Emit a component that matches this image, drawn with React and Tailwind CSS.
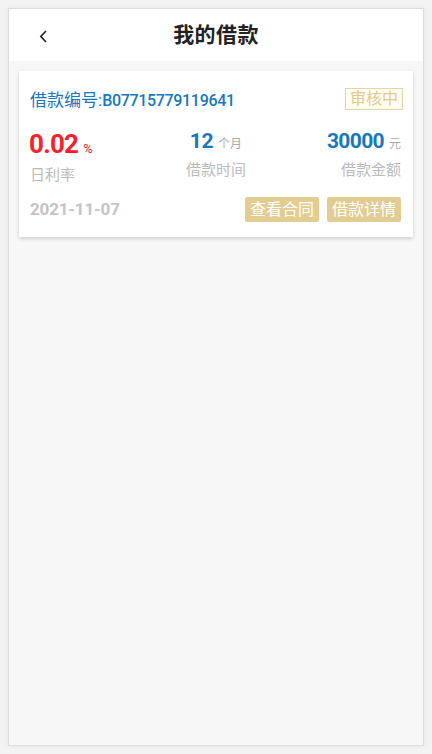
export default function App() {
  const font = { fontFamily: 'Roboto, "Noto Sans CJK SC", sans-serif' };
  return (
    <div className="w-[432px] h-[754px] bg-[#f3f3f3] p-2" style={font}>
      <div className="h-full border border-[#dddddd] bg-[#f7f7f7] shadow-[0_0_6px_rgba(0,0,0,0.06)] flex flex-col">
        <div className="h-[52px] bg-white relative flex items-center justify-center shrink-0">
          <svg className="absolute left-[30px] top-[21px]" width="9" height="13" viewBox="0 0 9 13">
            <path d="M7 1 L1.8 6.5 L7 12" fill="none" stroke="#222" strokeWidth="1.6" />
          </svg>
          <span className="text-[21px] font-bold text-[#222] leading-none tracking-[0.02em]">我的借款</span>
        </div>
        <div className="mx-[10px] mt-[10px] bg-white shadow-[0_2px_4px_rgba(0,0,0,0.16)] px-[10px] pt-[17px] pb-[15px]">
          <div className="flex items-center justify-between h-[22px]">
            <div className="flex items-baseline text-[#1777bf] leading-none pl-[1px] pt-[2px]">
              <span className="text-[17px]">借款编号:</span>
              <span className="text-[16px] font-medium tracking-[-0.02em]">B07715779119641</span>
            </div>
            <div className="h-[22px] px-[4px] border border-[#e8d6a2] bg-[#fffcf2] text-[#e2ca8c] text-[16px] leading-[20px]">审核中</div>
          </div>
          <div className="grid grid-cols-3 items-start mt-[21px]">
            <div className="flex flex-col items-start">
              <div className="flex items-baseline leading-none">
                <span className="text-[26px] font-bold text-[#f5222d] tracking-[-0.03em] leading-[26px]">0.02</span>
                <span className="text-[13px] text-[#f5222d] ml-[5px]">%</span>
              </div>
              <span className="mt-[11px] text-[15px] leading-[15px] text-[#bbbbbb] pl-[1px]">日利率</span>
            </div>
            <div className="flex flex-col items-center">
              <div className="flex items-baseline leading-none">
                <span className="text-[21px] font-bold text-[#1777bf] tracking-[-0.02em] leading-[21px]">12</span>
                <span className="text-[12px] text-[#aaaaaa] ml-[5px]">个月</span>
              </div>
              <span className="mt-[11px] text-[15px] leading-[15px] text-[#bbbbbb]">借款时间</span>
            </div>
            <div className="flex flex-col items-end pr-[2px]">
              <div className="flex items-baseline leading-none">
                <span className="text-[21px] font-bold text-[#1777bf] tracking-[-0.03em] leading-[21px]">30000</span>
                <span className="text-[12px] text-[#aaaaaa] ml-[5px]">元</span>
              </div>
              <span className="mt-[11px] text-[15px] leading-[15px] text-[#bbbbbb]">借款金额</span>
            </div>
          </div>
          <div className="flex items-center justify-between mt-[14px] h-[25px]">
            <span className="text-[17px] font-bold text-[#c4c4c4] tracking-[-0.01em] leading-none pl-[1px]">2021-11-07</span>
            <div className="flex gap-[8px] pr-[2px]">
              <div className="h-[25px] px-[5px] rounded-[2px] bg-[#e2cc92] text-white text-[16px] leading-[25px]">查看合同</div>
              <div className="h-[25px] px-[5px] rounded-[2px] bg-[#e2cc92] text-white text-[16px] leading-[25px]">借款详情</div>
            </div>
          </div>
        </div>
      </div>
    </div>
  );
}
